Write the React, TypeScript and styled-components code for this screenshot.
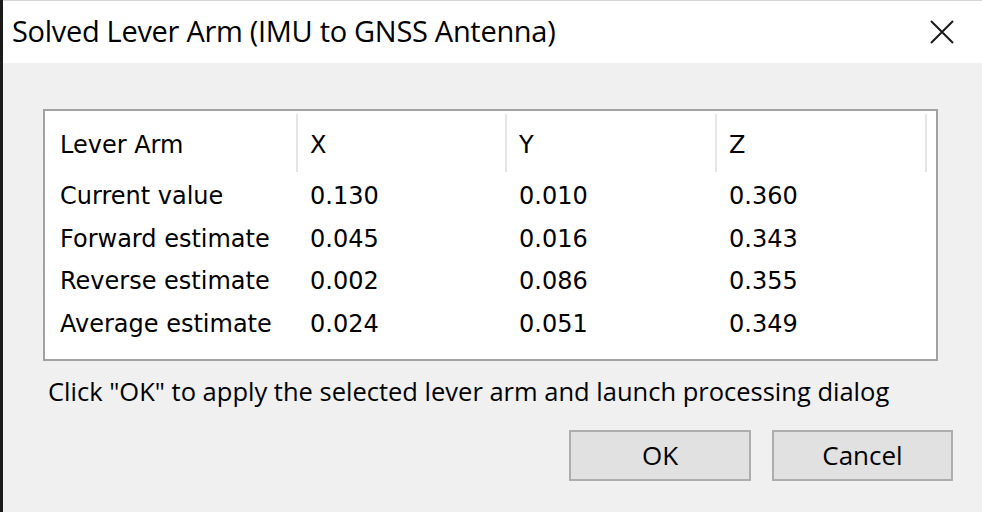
import React, { FC } from 'react';
import styled, { createGlobalStyle } from 'styled-components';

const GlobalStyle = createGlobalStyle`
  html, body {
    margin: 0;
    padding: 0;
    background: #f0f0f0;
  }
  * {
    box-sizing: border-box;
  }
`;

interface Row {
  label: string;
  x: string;
  y: string;
  z: string;
}

const rows: Row[] = [
  { label: 'Current value', x: '0.130', y: '0.010', z: '0.360' },
  { label: 'Forward estimate', x: '0.045', y: '0.016', z: '0.343' },
  { label: 'Reverse estimate', x: '0.002', y: '0.086', z: '0.355' },
  { label: 'Average estimate', x: '0.024', y: '0.051', z: '0.349' },
];

const columns = '253px 209px 210px 210px';

const Window = styled.div`
  display: flex;
  flex-direction: column;
  min-height: 100vh;
  border-left: 3px solid #1b1b1b;
  background: #f0f0f0;
`;

const TitleBar = styled.div`
  display: flex;
  align-items: center;
  justify-content: space-between;
  height: 63px;
  padding: 0 28px 0 9px;
  background: #ffffff;
  border-top: 1px solid #d4d4d4;
`;

const Title = styled.div`
  margin-top: -2px;
  font-family: 'Open Sans', sans-serif;
  font-size: 29px;
  letter-spacing: -0.3px;
  line-height: 40px;
  color: #000000;
`;

const CloseButton = styled.button`
  display: flex;
  align-items: center;
  justify-content: center;
  width: 24px;
  height: 24px;
  padding: 0;
  margin-top: -1px;
  border: none;
  background: transparent;
  color: #1a1a1a;
`;

const Body = styled.div`
  display: flex;
  flex-direction: column;
  padding: 46px 44px 0 40px;
`;

const ListBox = styled.div`
  height: 252px;
  border: 2px solid #a2a2a2;
  background: #ffffff;
  font-family: 'DejaVu Sans', sans-serif;
  font-size: 24px;
  color: #000000;
`;

const HeaderRow = styled.div`
  display: grid;
  grid-template-columns: ${columns};
  height: 64px;
  padding-top: 3px;
`;

const HeaderCell = styled.div<{ $first?: boolean }>`
  height: 58px;
  padding: 4px 0 0 ${(p) => (p.$first ? '15px' : '12px')};
  line-height: 55px;
  border-right: 2px solid #e5e5e5;
  white-space: nowrap;
`;

const DataRow = styled.div`
  display: grid;
  grid-template-columns: ${columns};
  height: 42.5px;
  line-height: 42.5px;
`;

const DataCell = styled.div<{ $first?: boolean }>`
  padding-left: ${(p) => (p.$first ? '15px' : '12px')};
  white-space: nowrap;
`;

const Hint = styled.div`
  margin: 13px 0 0 5px;
  font-family: 'Open Sans', sans-serif;
  font-size: 25.5px;
  line-height: 35px;
  color: #000000;
  white-space: nowrap;
`;

const Footer = styled.div`
  display: flex;
  justify-content: flex-end;
  gap: 21px;
  margin: 21px -15px 0 0;
`;

const Button = styled.button<{ $width: number }>`
  width: ${(p) => p.$width}px;
  height: 51px;
  border: 2px solid #adadad;
  background: #e1e1e1;
  font-family: 'Open Sans', sans-serif;
  font-size: 26px;
  line-height: 1;
  color: #000000;
  padding: 0 0 2px;
`;

const CloseIcon: FC = () => (
  <svg width="24" height="24" viewBox="0 0 24 24" fill="none">
    <path d="M1 1L23 23M23 1L1 23" stroke="currentColor" strokeWidth="2" />
  </svg>
);

const App: FC = () => {
  return (
    <>
      <GlobalStyle />
      <Window>
        <TitleBar>
          <Title>Solved Lever Arm (IMU to GNSS Antenna)</Title>
          <CloseButton aria-label="Close">
            <CloseIcon />
          </CloseButton>
        </TitleBar>
        <Body>
          <ListBox>
            <HeaderRow>
              <HeaderCell $first>Lever Arm</HeaderCell>
              <HeaderCell>X</HeaderCell>
              <HeaderCell>Y</HeaderCell>
              <HeaderCell>Z</HeaderCell>
            </HeaderRow>
            {rows.map((row) => (
              <DataRow key={row.label}>
                <DataCell $first>{row.label}</DataCell>
                <DataCell>{row.x}</DataCell>
                <DataCell>{row.y}</DataCell>
                <DataCell>{row.z}</DataCell>
              </DataRow>
            ))}
          </ListBox>
          <Hint>Click "OK" to apply the selected lever arm and launch processing dialog</Hint>
          <Footer>
            <Button $width={182}>OK</Button>
            <Button $width={181}>Cancel</Button>
          </Footer>
        </Body>
      </Window>
    </>
  );
};

export default App;
